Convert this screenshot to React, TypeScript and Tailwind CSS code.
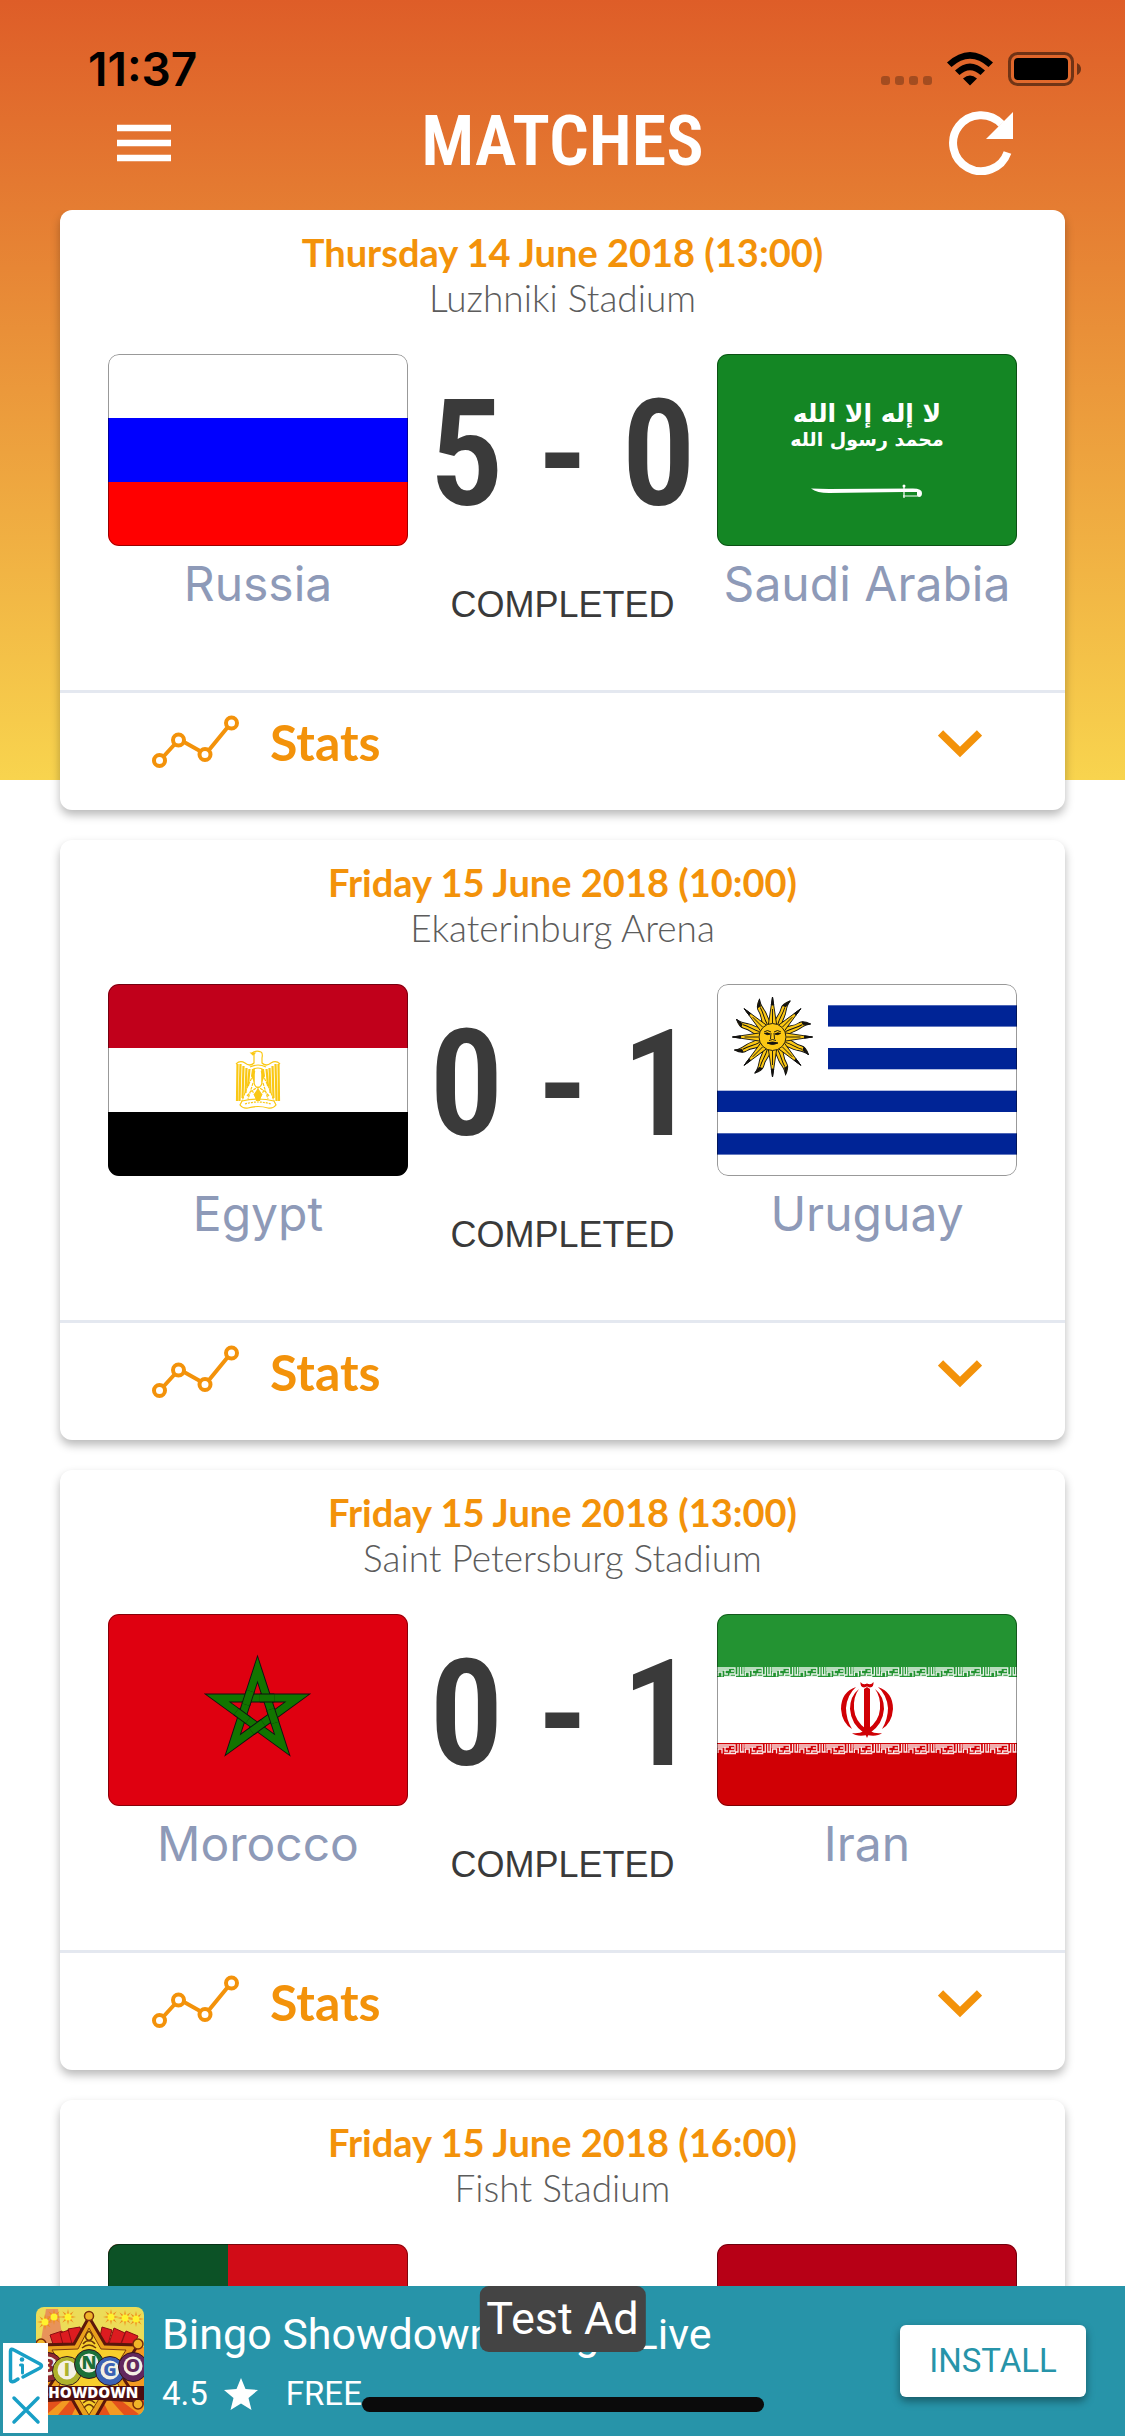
import type { ReactNode } from 'react';

type Match = {
  date: string;
  stadium: string;
  home: string;
  away: string;
  score: string;
  status: string;
};

const matches: Match[] = [
  { date: 'Thursday 14 June 2018 (13:00)', stadium: 'Luzhniki Stadium', home: 'Russia', away: 'Saudi Arabia', score: '5 - 0', status: 'COMPLETED' },
  { date: 'Friday 15 June 2018 (10:00)', stadium: 'Ekaterinburg Arena', home: 'Egypt', away: 'Uruguay', score: '0 - 1', status: 'COMPLETED' },
  { date: 'Friday 15 June 2018 (13:00)', stadium: 'Saint Petersburg Stadium', home: 'Morocco', away: 'Iran', score: '0 - 1', status: 'COMPLETED' },
  { date: 'Friday 15 June 2018 (16:00)', stadium: 'Fisht Stadium', home: 'Portugal', away: 'Spain', score: '3 - 3', status: 'COMPLETED' },
];

function Russia() {
  return (
    <>
      <rect width="300" height="64" fill="#fff" />
      <rect y="64" width="300" height="64" fill="#00f" />
      <rect y="128" width="300" height="64" fill="#f00" />
    </>
  );
}

function SaudiArabia() {
  return (
    <>
      <rect width="300" height="192" fill="#148624" />
      <g fill="#fff" fontFamily="'DejaVu Sans', sans-serif" fontWeight="700" textAnchor="middle">
        <text x="150" y="68" fontSize="25" direction="rtl">لا إله إلا الله</text>
        <text x="150" y="92" fontSize="19" direction="rtl">محمد رسول الله</text>
      </g>
      <path d="M94 134.500Q102 134.500 112 135L196 134.500Q205 134.500 205 139Q205 143 202 143L200 141.500V138H186L112 139Q100 139 94 134.500Z" fill="#fff" />
      <path d="M187 131V144M186 142H202" stroke="#fff" strokeWidth="1.200" fill="none" />
      <circle cx="187" cy="132" r="1.500" fill="#fff" />
    </>
  );
}

function Egypt() {
  return (
    <>
      <rect width="300" height="192" fill="#fff" />
      <rect width="300" height="64" fill="#c1001b" />
      <rect y="128" width="300" height="64" fill="#000" />
      <g fill="none" stroke="#fac814" strokeWidth="1.200">
        <path d="M144 69Q148 66 153 68Q155 69 154 74V79Q158 83 163 79Q168 76 172 80M146 70V79Q142 83 137 79Q132 76 128 80" />
        <path d="M143 69H147L145 71Z" fill="#fac814" />
        <path d="M142 83Q150 79 158 83M144 86Q150 82 156 86" />
        <path d="M147 87L138 106L134 117M153 87L162 106L166 117M145 99L140 115M155 99L160 115M142 108L150 103L158 108M139 112L144 106L148 114M161 112L156 106L152 114" strokeDasharray="3 1" />
        <path d="M134 117Q150 113 166 117L168 121Q165 125 160 124Q150 121 140 124Q135 125 132 121Z" />
        <path d="M137 120Q150 116 163 120" strokeDasharray="2 1" />
        <path d="M146 85L146 98Q146 102 150 104Q154 102 154 98V85" />
      </g>
      <g stroke="#fac814" strokeWidth="2.200" fill="none">
        <path d="M129.500 80L129 117M132.500 80L131.500 117M135.500 82L134.500 114M138.500 84L137.500 109M141.500 85L140 102M170.500 80L171 117M167.500 80L168.500 117M164.500 82L165.500 114M161.500 84L162.500 109M158.500 85L160 102" />
      </g>
      <path d="M144 85L146.500 85V99L143 92ZM156 85L153.500 85V99L157 92ZM150 104L154 110L152 117H148L146 110Z" fill="#fac814" />
      <path d="M147.500 86H152.500V99L150 102L147.500 99Z" fill="#fff" />
    </>
  );
}

const eightRays = [0, 45, 90, 135, 180, 225, 270, 315];

function Uruguay() {
  return (
    <>
      <rect width="300" height="192" fill="#fff" />
      <g fill="#002496">
        <rect x="111" y="21.300" width="189" height="21.300" />
        <rect x="111" y="64" width="189" height="21.300" />
        <rect y="106.700" width="300" height="21.300" />
        <rect y="149.300" width="300" height="21.300" />
      </g>
      <g transform="translate(55.500 53)" stroke="#111" strokeWidth=".9" fill="#fcc814" strokeLinejoin="round">
        {eightRays.map((a) => (
          <g key={a} transform={`rotate(${a + 22.5})`}>
            <path d="M-4.500 -12C-5 -19 -1.500 -23 -3 -30C-3.500 -34 -1 -37 2.500 -40C1 -35 2 -32 3 -27C4 -21 2 -17 4.500 -12Z" />
            <path d="M0 -14C-1 -21 1 -25 0 -32" fill="none" />
            <path d="M-2.500 -33L2.500 -40L.5 -33Z" fill="#111" />
          </g>
        ))}
        {eightRays.map((a) => (
          <g key={a} transform={`rotate(${a})`}>
            <path d="M-4.200 -12L0 -40L4.200 -12Z" />
            <path d="M0 -14V-28" fill="none" />
            <path d="M-1.200 -32L0 -40L1.200 -32Z" fill="#111" />
          </g>
        ))}
        <circle r="13.500" />
        <path d="M-8.500 -5Q-5 -8 -1.500 -5M8.500 -5Q5 -8 1.500 -5M-1.500 -4L-2 2M1.500 -4L2 2M-3.500 3.500Q0 1.500 3.500 3.500" fill="none" />
        <path d="M-8 -3.500Q-5 -5 -2.500 -3Q-5 -1.500 -8 -3.500ZM8 -3.500Q5 -5 2.500 -3Q5 -1.500 8 -3.500ZM-5.500 6Q0 4 5.500 6Q0 9 -5.500 6Z" fill="#111" />
      </g>
    </>
  );
}

const starTips = [0, 1, 2, 3, 4].map((i) => {
  const angle = ((i * 72 - 90) * Math.PI) / 180;
  return { x: 149.5 + 42 * Math.cos(angle), y: 97 + 42 * Math.sin(angle) };
});
const starOrder = [0, 2, 4, 1, 3];
const starPath = `M${starOrder.map((i) => `${starTips[i].x} ${starTips[i].y}`).join('L')}Z`;
const starOverlaps = starOrder.map((from, n) => {
  const a = starTips[from];
  const b = starTips[starOrder[(n + 1) % 5]];
  const at = (t: number) => `${a.x + (b.x - a.x) * t} ${a.y + (b.y - a.y) * t}`;
  return `M${at(0.53)}L${at(0.71)}`;
});

function Morocco() {
  return (
    <>
      <rect width="300" height="192" fill="#df0010" />
      <g fill="none" strokeMiterlimit="10">
        <path d={starPath} stroke="#111" strokeWidth="9" />
        <path d={starPath} stroke="#127500" strokeWidth="7.200" />
        {starOverlaps.map((d) => (
          <g key={d}>
            <path d={d} stroke="#111" strokeWidth="9" />
            <path d={d} stroke="#127500" strokeWidth="7.200" />
          </g>
        ))}
      </g>
    </>
  );
}

const kuficTiles = [0, 1, 2, 3, 4, 5, 6, 7, 8, 9, 10];

function Kufic() {
  return (
    <g fill="none" stroke="#fff" strokeWidth="1.300" opacity=".9">
      {kuficTiles.map((n) => (
        <g key={n} transform={`translate(${n * 27.27} 0)`}>
          <path d="M0 1H18V7H13V9.500M1 9V5H5V9.500M8 3.500V7H11M7 9.500H19M14 4H17M21 0V8H18M23.500 0V8H27M26 0V8M0 3H12" />
        </g>
      ))}
    </g>
  );
}

function Iran() {
  return (
    <>
      <rect width="300" height="192" fill="#fff" />
      <rect width="300" height="63" fill="#239332" />
      <rect y="129" width="300" height="63" fill="#d00005" />
      <g transform="translate(0 53)"><Kufic /></g>
      <g transform="translate(0 130)"><Kufic /></g>
      <g fill="#d00005">
        <path d="M147 75L150 73L153 75V117L150 124L147 117Z" />
        <path d="M143.500 68Q146 71.500 150 69.500Q154 71.500 156.500 68Q157 73 153 73.500L150 72.500L147 73.500Q143 73 143.500 68Z" />
        <path d="M139 73Q124 78 124 95Q125 109 135 115Q129 105 129 94Q130 81 139 73ZM161 73Q176 78 176 95Q175 109 165 115Q171 105 171 94Q170 81 161 73Z" />
        <path d="M142 75Q133 82 133 95Q134 110 147 119L149 115Q138 107 137 95Q136 83 142 75ZM158 75Q167 82 167 95Q166 110 153 119L151 115Q162 107 163 95Q164 83 158 75Z" />
        <path d="M135 119Q142 120 147 117H153Q158 120 165 119Q160 123 150 121Q140 123 135 119Z" />
      </g>
    </>
  );
}

function Portugal() {
  return (
    <>
      <rect width="300" height="192" fill="#d10c17" />
      <rect width="120" height="192" fill="#0c5226" />
      <circle cx="120" cy="96" r="37" fill="#fcd116" />
      <path d="M104 78H136V100Q134 112 120 116Q106 112 104 100Z" fill="#fff" stroke="#d10c17" strokeWidth="6" />
    </>
  );
}

function Spain() {
  return (
    <>
      <rect width="300" height="192" fill="#b70016" />
      <rect y="48" width="300" height="96" fill="#fcc400" />
    </>
  );
}

const flags: Record<string, () => ReactNode> = {
  Russia,
  'Saudi Arabia': SaudiArabia,
  Egypt,
  Uruguay,
  Morocco,
  Iran,
  Portugal,
  Spain,
};

function Team({ name }: { name: string }) {
  const Flag = flags[name];
  return (
    <div className="flex w-[300px] flex-col items-center">
      <svg viewBox="0 0 300 192" className="w-full rounded-[11px]" role="img" aria-label={`Flag of ${name}`}>
        <Flag />
        <rect x=".5" y=".5" width="299" height="191" rx="10.500" fill="none" stroke="#000" strokeOpacity=".4" />
      </svg>
      <span className="mt-2 font-['Inter',sans-serif] text-[48px] leading-[60px] whitespace-nowrap text-[#8e9ab8]">{name}</span>
    </div>
  );
}

function MatchCard({ match }: { match: Match }) {
  return (
    <article className="shrink-0 rounded-xl bg-white shadow-[0_5px_10px_rgba(0,0,0,0.28)]">
      <header className="pt-5 text-center font-['Lato',sans-serif] leading-[45px]">
        <h2 className="text-[38px] font-bold text-[#f3920a]">{match.date}</h2>
        <p className="text-[37px] font-light text-[#5c5c5c]">{match.stadium}</p>
      </header>
      <div className="flex justify-between px-12 pt-[34px] pb-[60px]">
        <Team name={match.home} />
        <div className="flex flex-1 flex-col items-center text-[#3a3a3a]">
          <span className="font-['Roboto_Condensed','Roboto',sans-serif] text-[148px] leading-[202px] font-semibold whitespace-nowrap">{match.score}</span>
          <span className="mt-6 font-['Liberation_Sans',sans-serif] text-[36px] leading-[50px]">{match.status}</span>
        </div>
        <Team name={match.away} />
      </div>
      <button type="button" className="flex h-[120px] w-full items-center border-t-3 border-[#e4e8f0] pr-[83px] pb-5 pl-[92px] text-[#f3920a]">
        <svg viewBox="0 0 88 54" className="h-[54px] w-[88px]" fill="none" stroke="currentColor" strokeWidth="4" aria-hidden="true">
          <path d="M12 41L22 30M32 27L48 36M57 35L75 13" />
          <circle cx="7.500" cy="45.500" r="5.500" />
          <circle cx="26.500" cy="25" r="5.500" />
          <circle cx="53" cy="39.500" r="5.500" />
          <circle cx="79.500" cy="8" r="5.500" />
        </svg>
        <span className="ml-[30px] flex-1 text-left font-['Lato',sans-serif] text-[50px] leading-[60px] font-bold">Stats</span>
        <svg viewBox="0 0 44 28" className="mt-1 h-7 w-11" fill="none" stroke="currentColor" strokeWidth="7.500" aria-hidden="true">
          <path d="M2.500 3L22 22L41.500 3" />
        </svg>
      </button>
    </article>
  );
}

function StatusBar() {
  return (
    <div className="flex h-[54px] items-center justify-between pr-11 pl-[88px]">
      <span className="font-['Inter',sans-serif] text-[46px] leading-[54px] font-semibold text-black">11:37</span>
      <svg viewBox="0 0 200 36" className="h-9 w-[200px]" aria-hidden="true">
        <g fill="#000" fillOpacity=".27">
          <rect y="25" width="9" height="9" rx="3" />
          <rect x="14" y="25" width="9" height="9" rx="3" />
          <rect x="28" y="25" width="9" height="9" rx="3" />
          <rect x="42" y="25" width="9" height="9" rx="3" />
        </g>
        <path d="M66 11.500Q89 -9.500 112 11.500L107.500 16Q89 -.5 70.500 16ZM74 19.500Q89 5.500 104 19.500L99.500 24Q89 14.500 78.500 24ZM82 27.500Q89 21.500 96 27.500L89 34.500Z" />
        <rect x="128.500" y="2.500" width="63" height="31" rx="8" fill="none" stroke="#000" strokeOpacity=".5" strokeWidth="3" />
        <rect x="133" y="7" width="54" height="22" rx="4" />
        <path d="M196 12Q200 14 200 18T196 24Z" fillOpacity=".5" />
      </svg>
    </div>
  );
}

const dynamite = [
  'M14 28L26 24L38 54L24 58Z',
  'M24 26L36 22L44 52L32 56Z',
  'M32 22L44 20L50 48L40 52Z',
  'M66 20L76 23L68 52L60 50Z',
  'M78 21L89 26L78 54L68 52Z',
  'M90 24L102 29L90 57L79 54Z',
];
const sparks = [[9, 15], [18, 10], [32, 10], [75, 10], [89, 11], [100, 12]];
const balls = [
  { letter: 'B', x: 12, y: 60, color: '#8e2830' },
  { letter: 'I', x: 31, y: 64, color: '#aeb22c' },
  { letter: 'N', x: 53, y: 57, color: '#1c7038' },
  { letter: 'G', x: 74, y: 64, color: '#3c62b4' },
  { letter: 'O', x: 97, y: 60, color: '#62285e' },
];

function BingoLogo() {
  return (
    <svg viewBox="0 0 108 108" className="size-[108px] rounded-lg" role="img" aria-label="Bingo Showdown">
      <rect width="108" height="108" fill="#ecdc58" />
      <path d="M0 40H108V108H0Z" fill="#f39a22" />
      <path d="M10 2H22L28 40H4Z" fill="#e8935a" />
      <path d="M54 70L0 92V108H10ZM54 70L22 108H36ZM54 70L60 108H74ZM54 70L88 108H104ZM54 70L108 98V86Z" fill="#e4511c" />
      {dynamite.map((d) => (
        <path key={d} d={d} fill="#dc1c20" stroke="#8b0d12" strokeWidth="1" />
      ))}
      {sparks.map(([x, y]) => (
        <g key={x} transform={`translate(${x} ${y})`}>
          {[0, 45, 90, 135].map((a) => (
            <path key={a} d="M-8 0L0 -1.500L8 0L0 1.500Z" transform={`rotate(${a})`} fill="#f08a18" />
          ))}
          <circle r="3.500" fill="#fff22e" />
        </g>
      ))}
      <path d="M53 10L69 37L102 38L84 66L102 94L70 92L53 122L36 92L4 94L22 66L4 38L38 37Z" fill="#e9a01c" stroke="#5c170b" strokeWidth="3" />
      <path d="M53 21L65 42L90 43L76 66L88 88L66 87L53 108L40 87L18 88L30 66L16 43L42 42Z" fill="#f8cf2c" stroke="#7c3c0c" strokeWidth="1" />
      <path d="M53 24Q46 30 53 34Q60 30 53 24M47 37Q53 30 59 37M46 41Q53 35 60 41M47 96Q53 90 59 96M48 101Q53 94 58 101" fill="none" stroke="#6d370b" strokeWidth="1.500" />
      <g fill="#f0b428" stroke="#7a2c0a" strokeWidth="1.500">
        <circle cx="53" cy="9" r="4.500" />
        <circle cx="102" cy="37" r="5" />
        <circle cx="5" cy="37" r="5" />
        <circle cx="102" cy="97" r="5" />
      </g>
      <g fontFamily="'Open Sans', sans-serif" fontWeight="800" textAnchor="middle">
        {balls.map((b) => (
          <g key={b.letter}>
            <circle cx={b.x} cy={b.y} r="14.500" fill={b.color} stroke="#35151b" strokeWidth="1" />
            <circle cx={b.x} cy={b.y - 1} r="9.500" fill="#f4f1e4" />
            <text x={b.x} y={b.y + 5} fontSize="18" fill={b.color}>{b.letter}</text>
          </g>
        ))}
        <rect y="79" width="108" height="14" fill="#4c0d10" />
        <text x="53" y="91" fontSize="15" fill="#fff">SHOWDOWN</text>
      </g>
    </svg>
  );
}

function AdBanner() {
  return (
    <aside className="relative flex h-[150px] shrink-0 items-start bg-[#2794a9] pr-[39px] pl-9 font-['Roboto',sans-serif] text-white">
      <div className="mt-[21px]">
        <BingoLogo />
      </div>
      <div className="mt-5 ml-[18px] flex flex-1 flex-col gap-1 leading-[56px]">
        <p className="text-[43px] whitespace-nowrap">Bingo Showdown: Bingo Live</p>
        <p className="flex items-center text-[33px]">
          4.5
          <svg viewBox="0 0 34 32" className="mr-7 ml-4 h-8 w-[34px]" fill="#fff" role="img" aria-label="stars">
            <path d="M17 0L21.500 11L34 12L24.500 20L27.500 32L17 25.500L6.500 32L9.500 20L0 12L12.500 11Z" />
          </svg>
          FREE
        </p>
      </div>
      <button type="button" className="mt-[39px] h-[72px] w-[186px] rounded-md bg-white text-[33px] text-[#2794a9] shadow-[0_4px_8px_rgba(0,0,0,0.4)]">
        INSTALL
      </button>
      <span className="absolute top-0 left-1/2 -translate-x-1/2 rounded-[9px] bg-[#444] px-[7px] text-[45px] leading-[66px] whitespace-nowrap">Test Ad</span>
      <div className="absolute bottom-[3px] left-[3px] flex h-[90px] w-[45px] flex-col items-center justify-between bg-white py-1 text-[#189fc6]">
        <a href="#adchoices" aria-label="AdChoices">
          <svg viewBox="0 0 36 38" className="h-[38px] w-9" fill="none" stroke="currentColor" strokeWidth="3.500" strokeLinejoin="round" strokeLinecap="round" aria-hidden="true">
            <path d="M10 32Q3 37 2.500 33V4Q2.500 1 6 3L32 17Q35 19 32 21L15 30" />
            <circle cx="14" cy="12.500" r="2.300" fill="currentColor" stroke="none" />
            <path d="M12.500 18H14.500V26" strokeWidth="3" />
          </svg>
        </a>
        <button type="button" aria-label="Close ad">
          <svg viewBox="0 0 30 30" className="mb-1 size-[30px]" fill="none" stroke="currentColor" strokeWidth="3.500" strokeLinecap="round" aria-hidden="true">
            <path d="M3 3L27 27M27 3L3 27" />
          </svg>
        </button>
      </div>
      <div className="absolute bottom-6 left-1/2 h-[15px] w-[402px] -translate-x-1/2 rounded-full bg-[#0b0b0b]" />
    </aside>
  );
}

export default function App() {
  return (
    <div className="flex h-screen flex-col overflow-hidden bg-[linear-gradient(to_bottom,#de5d28_0px,#f8d44e_780px,#ffffff_780px)]">
      <header className="shrink-0 pt-[42px] pb-6">
        <StatusBar />
        <div className="grid h-[90px] grid-cols-[1fr_auto_1fr] items-center px-28 text-white">
          <button type="button" aria-label="Menu" className="justify-self-start pt-1">
            <svg viewBox="0 0 64 64" className="size-16" stroke="currentColor" strokeWidth="6.500" aria-hidden="true">
              <path d="M5 17H59M5 32H59M5 47H59" />
            </svg>
          </button>
          <h1 className="font-['Roboto_Condensed','Roboto',sans-serif] text-[70px] leading-[90px] font-semibold">MATCHES</h1>
          <button type="button" aria-label="Refresh" className="justify-self-end pt-1">
            <svg viewBox="0 0 64 64" className="size-16" aria-hidden="true">
              <path d="M58.500 41.500A28 28 0 1 1 52.500 13" fill="none" stroke="currentColor" strokeWidth="8" />
              <path d="M64 1V28H37Z" fill="currentColor" />
            </svg>
          </button>
        </div>
      </header>
      <main className="flex min-h-0 flex-1 flex-col gap-[30px] overflow-hidden px-[60px]">
        {matches.map((match) => (
          <MatchCard key={match.date} match={match} />
        ))}
      </main>
      <AdBanner />
    </div>
  );
}
